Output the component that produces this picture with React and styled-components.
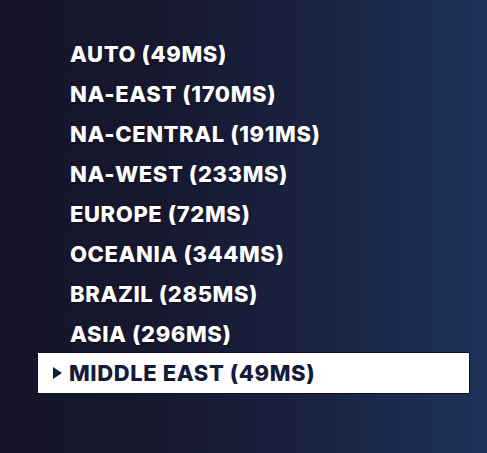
import React from 'react';
import styled, { createGlobalStyle } from 'styled-components';

const GlobalStyle = createGlobalStyle`
  html, body {
    margin: 0;
    padding: 0;
  }
  body {
    width: 487px;
    height: 453px;
    overflow: hidden;
  }
`;

const Screen = styled.div`
  width: 487px;
  height: 453px;
  box-sizing: border-box;
  padding: 34px 17px 0 37px;
  background: linear-gradient(90deg, #15142a 0%, #17172e 30%, #19213f 60%, #1b2c50 85%, #1c3259 100%);
  font-family: Inter, "Noto Sans", sans-serif;
`;

const RegionList = styled.ul`
  list-style: none;
  margin: 0;
  padding: 0;
  display: flex;
  flex-direction: column;
`;

const Region = styled.li`
  height: 40px;
  display: flex;
  align-items: center;
  box-sizing: border-box;
  padding-left: ${(p) => (p.$selected ? '15px' : '33px')};
  gap: 7px;
  font-size: 22px;
  font-weight: 800;
  letter-spacing: 0.6px;
  color: ${(p) => (p.$selected ? '#131a3a' : '#ffffff')};
  text-shadow: ${(p) => (p.$selected ? 'none' : '0 1px 2px rgba(0, 0, 0, 0.4)')};
  background: ${(p) => (p.$selected ? '#ffffff' : 'transparent')};
  border: ${(p) => (p.$selected ? '1px solid #0d1024' : 'none')};
  ${(p) => p.$selected && 'height: 42px; margin-top: -2px;'}
`;

const Arrow = styled.span`
  width: 0;
  height: 0;
  border-top: 6px solid transparent;
  border-bottom: 6px solid transparent;
  border-left: 9px solid #131a3a;
  margin-right: 0;
`;

const regions = [
  { name: 'AUTO', ping: 49 },
  { name: 'NA-EAST', ping: 170 },
  { name: 'NA-CENTRAL', ping: 191 },
  { name: 'NA-WEST', ping: 233 },
  { name: 'EUROPE', ping: 72 },
  { name: 'OCEANIA', ping: 344 },
  { name: 'BRAZIL', ping: 285 },
  { name: 'ASIA', ping: 296 },
  { name: 'MIDDLE EAST', ping: 49 },
];

export default function App() {
  const selected = 'MIDDLE EAST';
  return (
    <>
      <GlobalStyle />
      <Screen>
        <RegionList>
          {regions.map((r) => (
            <Region key={r.name} $selected={r.name === selected}>
              {r.name === selected && <Arrow />}
              {r.name} ({r.ping}MS)
            </Region>
          ))}
        </RegionList>
      </Screen>
    </>
  );
}
